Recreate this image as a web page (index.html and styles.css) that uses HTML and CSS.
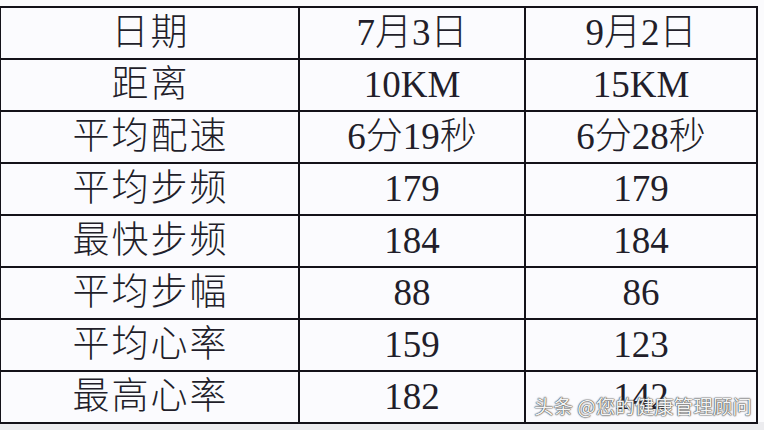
FILE: index.html
```html
<!DOCTYPE html>
<html lang="zh">
<head>
<meta charset="utf-8">
<title>跑步数据对比</title>
<link rel="stylesheet" href="styles.css">
</head>
<body>
<div class="page">
  <table class="stats">
    <colgroup>
      <col class="c1"><col class="c2"><col class="c3">
    </colgroup>
    <tr><td class="label">日期</td><td>7月3日</td><td>9月2日</td></tr>
    <tr><td class="label">距离</td><td>10KM</td><td>15KM</td></tr>
    <tr><td class="label">平均配速</td><td>6分19秒</td><td>6分28秒</td></tr>
    <tr><td class="label">平均步频</td><td>179</td><td>179</td></tr>
    <tr><td class="label">最快步频</td><td>184</td><td>184</td></tr>
    <tr><td class="label">平均步幅</td><td>88</td><td>86</td></tr>
    <tr><td class="label">平均心率</td><td>159</td><td>123</td></tr>
    <tr><td class="label">最高心率</td><td>182</td><td>142</td></tr>
  </table>
  <div class="watermark">头条 @您的健康管理顾问</div>
</div>
</body>
</html>
```

FILE: styles.css
```css
html, body {
  margin: 0;
  padding: 0;
  background: #f3f3f6;
}
body {
  width: 764px;
  height: 430px;
  overflow: hidden;
}
.page {
  position: relative;
  width: 764px;
  height: 430px;
  background: linear-gradient(#fbfbfd 0, #fbfbfd 422px, #ececef 422px);
  padding-top: 6px;
  box-sizing: border-box;
}
.stats {
  border-collapse: collapse;
  margin-left: -1px;
  table-layout: fixed;
  width: 758px;
  background: #fbfbfe;
  font-family: "Liberation Serif", "Noto Sans CJK SC", serif;
  font-weight: 300;
  font-size: 37px;
  color: #221e2a;
}
.c1 { width: 299px; }
.c2 { width: 226px; }
.c3 { width: 232px; }
.stats td {
  border: 2px solid #141219;
  height: 50px;
  padding: 0;
  text-align: center;
  vertical-align: middle;
  line-height: 50px;
  white-space: nowrap;
}
.stats td.label {
  letter-spacing: 2px;
  padding-left: 2px;
}
.watermark {
  position: absolute;
  left: 534px;
  top: 394px;
  font-family: "Noto Sans CJK SC", sans-serif;
  font-size: 19.5px;
  line-height: 24px;
  color: #f4f4f4;
  text-shadow: 0 0 1px #444, 0 0 1px #444, 0 0 2px #666;
  white-space: nowrap;
}
```
